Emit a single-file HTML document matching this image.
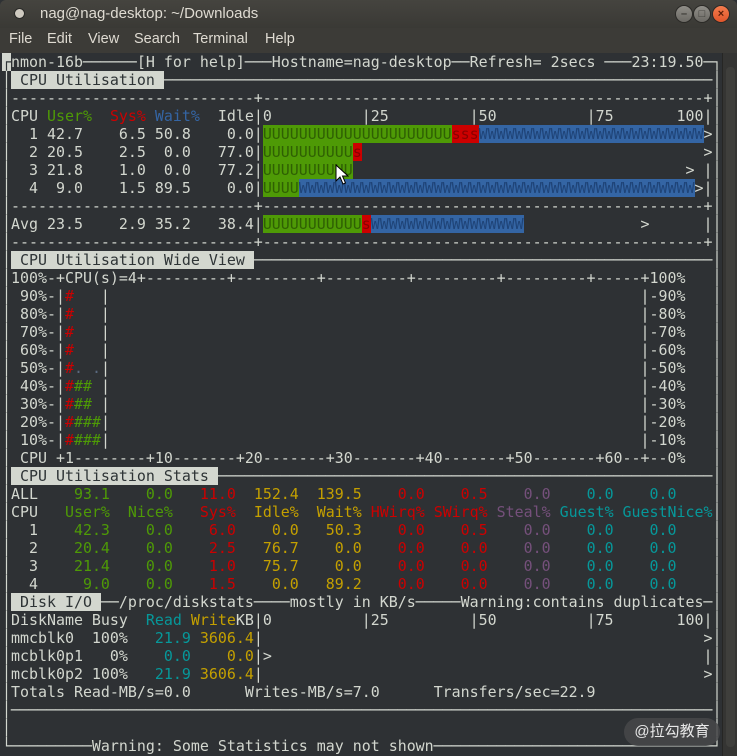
<!DOCTYPE html>
<html><head><meta charset="utf-8"><style>
html,body{margin:0;padding:0;}
body{width:737px;height:756px;overflow:hidden;background:#2e3134;position:relative;font-family:"Liberation Sans",sans-serif;}
#title{position:absolute;left:0;top:0;width:737px;height:28px;background:linear-gradient(#45443f,#3a3935);border-radius:6px 6px 0 0;}
#title .t{position:absolute;left:40px;top:5px;color:#dfdbd2;font-size:15px;}
#title .ic{position:absolute;left:15px;top:9px;width:9px;height:9px;border-radius:50%;background:#cfcac0;box-shadow:0 0 0 1px #2a2a28;}
.btn{position:absolute;top:6px;width:16px;height:16px;border-radius:50%;background:linear-gradient(#908e88,#6b6964);box-shadow:0 0 0 1px #2b2a27;color:#3a3935;font-size:11px;line-height:16px;text-align:center;font-weight:bold;}
#menu{position:absolute;left:0;top:28px;width:737px;height:25px;background:#3c3b37;color:#dfdbd2;font-size:14.5px;}
#menu span{position:absolute;top:3px;}
#term{position:absolute;left:2px;top:53px;margin:0;font-family:"DejaVu Sans Mono",monospace;font-size:14.95px;line-height:18px;color:#d3d7cf;white-space:pre;}
.h{background:#d3d7cf;color:#2e3436;}
.g{color:#4e9a06}.r{color:#cc0000}.b{color:#3465a4}.y{color:#c4a000}.p{color:#75507b}.c{color:#06989a}.d{color:#5a6a80}
.bg{background:#4e9a06;color:#2f6003}.br{background:#cc0000;color:#8a0000}.bb{background:#3465a4;color:#1f4478}
.cur{background:#d3d7cf;color:#2e3436}
#sb{position:absolute;left:722px;top:53px;width:15px;height:703px;background:#353533;border-left:1px solid #262624;}
#sb .th{position:absolute;left:3px;top:14px;width:9px;height:680px;background:#3f3f3c;border-radius:4px;}
#wm{position:absolute;left:624px;top:718px;width:96px;height:28px;border-radius:14px;background:rgba(70,72,74,0.85);color:#e8e8e8;font-family:"Liberation Sans","Noto Sans CJK SC",sans-serif;font-size:15px;line-height:28px;text-align:center;}
</style></head><body>
<div id="title"><div class="ic"></div><div class="t">nag@nag-desktop: ~/Downloads</div>
<div class="btn" style="left:676px">–</div><div class="btn" style="left:694px">□</div><div class="btn" style="left:713px;background:linear-gradient(#f47c4d,#e0552a);color:#5a1d08">×</div></div>
<div id="menu"><span style="left:9px">File</span><span style="left:47px">Edit</span><span style="left:88px">View</span><span style="left:134px">Search</span><span style="left:193px">Terminal</span><span style="left:265px">Help</span></div>
<div id="sb"><div class="th"></div></div>
<pre id="term"><span class="cur">┌</span>nmon-16b──────[H for help]───Hostname=nag-desktop──Refresh= 2secs ───23:19.50─┐
│<span class="h"> CPU Utilisation </span>─────────────────────────────────────────────────────────────│
│---------------------------+-------------------------------------------------+│
│CPU <span class="g">User%</span>  <span class="r">Sys%</span> <span class="b">Wait%</span>  Idle|0          |25         |50          |75       100|│
│  1 42.7    6.5 50.8    0.0|<span class="bg">UUUUUUUUUUUUUUUUUUUUU</span><span class="br">sss</span><span class="bb">WWWWWWWWWWWWWWWWWWWWWWWWW</span>&gt;│
│  2 20.5    2.5  0.0   77.0|<span class="bg">UUUUUUUUUU</span><span class="br">s</span>                                      &gt;│
│  3 21.8    1.0  0.0   77.2|<span class="bg">UUUUUUUUUU</span>                                     &gt; |│
│  4  9.0    1.5 89.5    0.0|<span class="bg">UUUU</span><span class="bb">WWWWWWWWWWWWWWWWWWWWWWWWWWWWWWWWWWWWWWWWWWWW</span>&gt;|│
│---------------------------+-------------------------------------------------+│
│Avg 23.5    2.9 35.2   38.4|<span class="bg">UUUUUUUUUUU</span><span class="br">s</span><span class="bb">WWWWWWWWWWWWWWWWW</span>             &gt;      |│
│---------------------------+-------------------------------------------------+│
│<span class="h"> CPU Utilisation Wide View </span>───────────────────────────────────────────────────│
│100%-+CPU(s)=4+---------+---------+---------+---------+---------+-----+100%   │
│ 90%-|<span class="r">#</span>   |                                                           |-90%   │
│ 80%-|<span class="r">#</span>   |                                                           |-80%   │
│ 70%-|<span class="r">#</span>   |                                                           |-70%   │
│ 60%-|<span class="r">#</span>   |                                                           |-60%   │
│ 50%-|<span class="r">#</span><span class="d">.</span> <span class="d">.</span>|                                                           |-50%   │
│ 40%-|<span class="r">#</span><span class="g">##</span> |                                                           |-40%   │
│ 30%-|<span class="r">#</span><span class="g">##</span> |                                                           |-30%   │
│ 20%-|<span class="r">#</span><span class="g">###</span>|                                                           |-20%   │
│ 10%-|<span class="r">#</span><span class="g">###</span>|                                                           |-10%   │
│ CPU +1--------+10-------+20-------+30-------+40-------+50-------+60--+--0%   │
│<span class="h"> CPU Utilisation Stats </span>───────────────────────────────────────────────────────│
│ALL<span class="g">    93.1</span><span class="g">    0.0</span><span class="r">   11.0</span><span class="y">  152.4</span><span class="y">  139.5</span><span class="r">    0.0</span><span class="r">    0.5</span><span class="p">    0.0</span><span class="c">    0.0</span><span class="c">    0.0</span>    │
│CPU<span class="g">   User%</span><span class="g">  Nice%</span><span class="r">   Sys%</span><span class="y">  Idle%</span><span class="y">  Wait%</span><span class="r"> HWirq%</span><span class="r"> SWirq%</span><span class="p"> Steal%</span><span class="c"> Guest%</span><span class="c"> GuestNice%</span>│
│  1<span class="g">    42.3</span><span class="g">    0.0</span><span class="r">    6.0</span><span class="y">    0.0</span><span class="y">   50.3</span><span class="r">    0.0</span><span class="r">    0.5</span><span class="p">    0.0</span><span class="c">    0.0</span><span class="c">    0.0</span>    │
│  2<span class="g">    20.4</span><span class="g">    0.0</span><span class="r">    2.5</span><span class="y">   76.7</span><span class="y">    0.0</span><span class="r">    0.0</span><span class="r">    0.0</span><span class="p">    0.0</span><span class="c">    0.0</span><span class="c">    0.0</span>    │
│  3<span class="g">    21.4</span><span class="g">    0.0</span><span class="r">    1.0</span><span class="y">   75.7</span><span class="y">    0.0</span><span class="r">    0.0</span><span class="r">    0.0</span><span class="p">    0.0</span><span class="c">    0.0</span><span class="c">    0.0</span>    │
│  4<span class="g">     9.0</span><span class="g">    0.0</span><span class="r">    1.5</span><span class="y">    0.0</span><span class="y">   89.2</span><span class="r">    0.0</span><span class="r">    0.0</span><span class="p">    0.0</span><span class="c">    0.0</span><span class="c">    0.0</span>    │
│<span class="h"> Disk I/O </span>──/proc/diskstats────mostly in KB/s─────Warning:contains duplicates─│
│DiskName Busy  <span class="c">Read</span> <span class="y">Write</span>KB|0          |25         |50          |75       100|│
│mmcblk0  100%   <span class="c">21.9</span> <span class="y">3606.4</span>|                                                 &gt;│
│mcblk0p1   0%    <span class="c">0.0</span><span class="y">    0.0</span>|&gt;                                                |│
│mcblk0p2 100%   <span class="c">21.9</span> <span class="y">3606.4</span>|                                                 &gt;│
│Totals Read-MB/s=0.0      Writes-MB/s=7.0      Transfers/sec=22.9             │
│──────────────────────────────────────────────────────────────────────────────│
│                                                                              │
└─────────Warning: Some Statistics may not shown───────────────────────────────┘</pre>
<svg style="position:absolute;left:335px;top:164px" width="14" height="22" viewBox="0 0 14 22"><path d="M1 1 L1 17 L5 13 L8 20 L10.5 19 L7.5 12 L13 12 Z" fill="#fff" stroke="#000" stroke-width="1"/></svg>
<div id="wm">@拉勾教育</div>
</body></html>
